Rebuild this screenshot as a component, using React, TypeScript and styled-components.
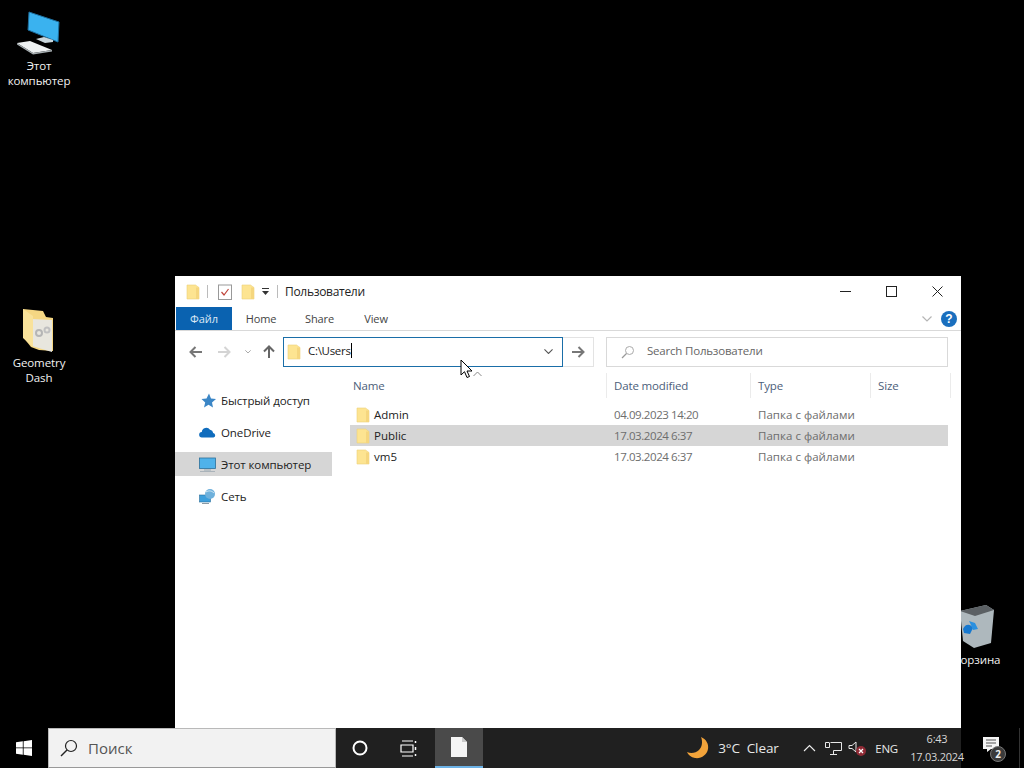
import React from "react";
import styled, { createGlobalStyle } from "styled-components";

const Global = createGlobalStyle`
  html, body { margin: 0; padding: 0; background: #000; overflow: hidden; }
  * { box-sizing: border-box; }
  #root { width: 1024px; height: 768px; }
`;
const FONT = `"Open Sans", "Noto Sans", "Liberation Sans", sans-serif`;

const Desktop = styled.div`
  position: relative; width: 1024px; height: 768px; background: #000; overflow: hidden;
  font-family: ${FONT}; font-size: 12px; color: #1a1a1a;
`;
const Workspace = styled.div`position: relative; height: 728px;`;
const DesktopIcon = styled.div<{ $x: number; $y: number }>`
  position: absolute; left: ${p => p.$x}px; top: ${p => p.$y}px; width: 78px;
  display: flex; flex-direction: column; align-items: center; color: #f2f2f2;
  font-size: 11.5px; line-height: 15px; text-align: center; letter-spacing: -0.1px;
`;
const IconLabel = styled.div`margin-top: 2px;`;
const ShortGlyph = styled.svg`display: block;`;

const Window = styled.div`
  position: absolute; left: 175px; top: 276px; width: 786px; height: 452px;
  background: #fff; display: flex; flex-direction: column;
`;
const TitleBar = styled.div`
  height: 31px; display: flex; align-items: center; padding-left: 10px; flex: none;
`;
const TitleText = styled.span`margin-left: 7px; letter-spacing: -0.3px; color: #222;`;
const Sep = styled.span`width: 1px; height: 13px; background: #bbb; margin: 0 9px 0 6px;`;
const SepTitle = styled(Sep)`margin: 0 0 0 7px;`;
const QuickGap = styled.span<{ $w: number }>`width: ${p => p.$w}px;`;
const WinControls = styled.div`margin-left: auto; display: flex; height: 31px; padding-right: 1px;`;
const WinBtn = styled.div<{ $w?: number }>`
  width: ${p => p.$w ?? 46}px; display: flex; align-items: center; justify-content: center;
`;
const RibbonTabs = styled.div`
  height: 24px; display: flex; align-items: stretch; border-bottom: 1px solid #d9d9d9; flex: none;
  position: relative; padding-left: 1px;
`;
const FileTab = styled.div`
  width: 56px; background: #0a62b0; color: #dbe8f5; display: flex; align-items: center; justify-content: center;
  font-size: 11px; letter-spacing: -0.1px;
`;
const Tab = styled.div<{ $w: number }>`
  width: ${p => p.$w}px; display: flex; align-items: center; justify-content: center;
  font-size: 11px; color: #444; letter-spacing: -0.1px;
`;
const RibbonRight = styled.div`
  margin-left: auto; display: flex; align-items: center; gap: 9px; padding-right: 4px;
`;
const Help = styled.div`
  width: 16px; height: 16px; border-radius: 50%; background: #1a6fbe; color: #fff;
  font: bold 12px "Liberation Sans", sans-serif; display: flex; align-items: center; justify-content: center;
`;
const NavBar = styled.div`
  height: 42px; display: flex; align-items: center; padding: 0 13px 1px 0; flex: none;
`;
const NavBtns = styled.div`
  width: 108px; display: flex; align-items: center; flex: none; padding-left: 13px;
`;
const NavSlot = styled.div<{ $w: number; $gap?: number }>`
  width: ${p => p.$w}px; margin-left: ${p => p.$gap ?? 0}px;
  display: flex; align-items: center; justify-content: center;
`;
const AddressBox = styled.div`
  width: 280px; height: 30px; border: 1px solid #1a6ea8; display: flex; align-items: center; padding: 0 9px 0 2px;
  flex: none;
`;
const AddressText = styled.span`
  margin: 0 0 2px 6px; font-size: 11.5px; letter-spacing: -0.3px; color: #222; border-right: 1px solid #000;
  line-height: 15px;
`;
const AddressSpacer = styled.span`flex: 1;`;
const GoBtn = styled.div`
  width: 31px; height: 30px; border: 1px solid #e3e3e3; border-left: none; display: flex; align-items: center;
  justify-content: center; flex: none;
`;
const SearchBox = styled.div`
  width: 342px; height: 30px; margin-left: 12px; border: 1px solid #d9d9d9; display: flex; align-items: center;
  padding-left: 14px; color: #666; font-size: 11.5px; letter-spacing: -0.2px;
`;
const SearchPlaceholder = styled.span`margin: 0 0 2px 12px;`;
const Body = styled.div`flex: 1; display: flex; min-height: 0;`;
const Sidebar = styled.div`
  width: 175px; flex: none; padding-top: 15px; display: flex; flex-direction: column; gap: 8px;
`;
const NavItem = styled.div<{ $active?: boolean }>`
  width: 157px; height: 24px; display: flex; align-items: center; padding-left: 24px; gap: 5px;
  background: ${p => (p.$active ? "#d6d6d6" : "transparent")}; color: #222;
  font-size: 11.5px; letter-spacing: -0.1px;
`;
const NavIcon = styled.span`width: 17px; height: 17px; display: flex; align-items: center; justify-content: flex-end;`;
const ListPane = styled.div`flex: 1; display: flex; flex-direction: column; position: relative;`;
const Columns = "257px 144px 120px 80px";
const HeaderRow = styled.div`
  display: grid; grid-template-columns: ${Columns}; height: 25px; color: #4c607a; flex: none; margin-bottom: 6px;
  font-size: 11.5px; letter-spacing: -0.15px;
`;
const HeaderCell = styled.div`
  border-right: 1px solid #ebebeb; display: flex; align-items: center; padding: 0 0 1px 7px;
  &:first-child { padding-left: 3px; }
`;
const SortCaret = styled.svg`position: absolute; left: 123px; top: -2px;`;
const Row = styled.div<{ $active?: boolean }>`
  display: grid; grid-template-columns: 257px 144px 120px 76px; height: 21px; align-items: center;
  width: 598px; background: ${p => (p.$active ? "#d6d6d6" : "transparent")};
  font-size: 11.5px;
`;
const NameCell = styled.div`display: flex; align-items: center; gap: 3px; padding-left: 5px; color: #222;`;
const NameLabel = styled.span`margin-bottom: 1px;`;
const MetaCell = styled.div`padding: 0 0 1px 7px; color: #6d6d6d; letter-spacing: -0.42px;`;
const TypeCell = styled(MetaCell)`letter-spacing: 0.03px;`;
const Cursor = styled.svg`position: absolute; left: 460px; top: 359px; z-index: 5;`;

const Taskbar = styled.div`
  position: relative; height: 40px; display: flex; align-items: stretch; background: #000; color: #fff;
`;
const StartBtn = styled.div`width: 48px; display: flex; align-items: center; justify-content: center;`;
const SearchBar = styled.div`
  width: 288px; background: #f2f2f2; border: 1px solid #b9b9b9; border-bottom-color: #999;
  display: flex; align-items: center; padding-left: 11px; color: #555; font-size: 15px;
`;
const SearchLabel = styled.span`margin-left: 10px;`;
const DarkBar = styled.div`
  width: 625px; background: #202020; display: flex; align-items: stretch;
`;
const TaskBtn = styled.div<{ $active?: boolean }>`
  width: 48px; flex: none; display: flex; align-items: center; justify-content: center;
  ${p => p.$active && `background: #4a4a4a; border-bottom: 2px solid #6cb2e6; margin-left: 3px;`}
`;
const Tray = styled.div`
  margin-left: auto; display: flex; align-items: center; padding-right: 0;
`;
const Weather = styled.div`
  display: flex; align-items: center; font-size: 13.5px; color: #e8e8e8; letter-spacing: -0.1px; width: 111px;
`;
const WeatherText = styled.span`margin-left: 8px; white-space: pre;`;
const TrayIcon = styled.div`width: 24px; display: flex; align-items: center; justify-content: center;`;
const Lang = styled.div`font-size: 11.5px; color: #e8e8e8; margin: 0 2px 0 6px; letter-spacing: -0.2px;`;
const Clock = styled.div`
  width: 76px; margin-left: -1px; text-align: center; font-size: 11px; line-height: 18px; color: #d8d8d8; letter-spacing: -0.25px;
  margin-right: -14px; position: relative; z-index: 1;
`;
const NotifyArea = styled.div`
  flex: 1; display: flex; align-items: center; justify-content: center; padding-left: 8px;
  border-right: 1px solid #333; margin-right: 4px;
`;
const Badge = styled.div`position: relative; width: 22px; height: 24px; top: 1px;`;
const BadgeCount = styled.span`
  position: absolute; left: 7px; top: 9px; width: 16px; height: 16px; border-radius: 50%;
  background: #3a3a3a; border: 1px solid #777; color: #eee; font-size: 10px; font-weight: 700;
  display: flex; align-items: center; justify-content: center;
`;

const Folder = ({ s = 16 }: { s?: number }) => (
  <svg width={s} height={s} viewBox="0 0 16 16">
    <path d="M2 1h8.500L14 3.500V15H2z" fill="#fde491" stroke="#ecd07a" strokeWidth="0.6" />
    <path d="M11 3.500h3V15h-3z" fill="#f5d67e" />
  </svg>
);
const Arrow = ({ dir, color }: { dir: "l" | "r" | "u"; color: string }) => {
  const rot = dir === "l" ? 0 : dir === "r" ? 180 : 90;
  return (
    <svg width="14" height="14" viewBox="0 0 14 14" style={{ transform: `rotate(${rot}deg)` }}>
      <path d="M1.5 7H13M6.5 2 1.5 7l5 5" fill="none" stroke={color} strokeWidth="2" />
    </svg>
  );
};
const Chev = ({ w = 9, color = "#555" }: { w?: number; color?: string }) => (
  <svg width={w} height={w * 0.6} viewBox="0 0 10 6">
    <path d="M0.5 0.5 5 5l4.5-4.5" fill="none" stroke={color} strokeWidth="1.2" />
  </svg>
);
const Monitor = ({ s = 17 }: { s?: number }) => (
  <svg width={s} height={s} viewBox="0 0 17 17">
    <rect x="0.5" y="2" width="16" height="10.5" fill="#4fb2ea" stroke="#2b6f9b" strokeWidth="0.8" />
    <rect x="5" y="13.5" width="7" height="1" fill="#9aa9b3" />
    <rect x="1" y="15" width="15" height="1" fill="#aab3ba" />
  </svg>
);

const rows = [
  { name: "Admin", date: "04.09.2023 14:20" },
  { name: "Public", date: "17.03.2024 6:37", active: true },
  { name: "vm5", date: "17.03.2024 6:37" },
];

export default function App() {
  return (
    <Desktop>
      <Global />
      <Workspace>
        <DesktopIcon $x={0} $y={10}>
          <ShortGlyph width="48" height="46" viewBox="0 0 48 46">
            <path d="M14 2 44 12 43 32 13 20z" fill="#3ab2ef" stroke="#1d6d9c" strokeWidth="1" />
            <path d="M21 29l8-2 9 3v2l-8 1z" fill="#c9d6dc" />
            <path d="M2 33l13-2 22 9-19 3z" fill="#eef1f2" />
            <path d="M2 33v1.500L18 44.500l19-3V40l-19 3z" fill="#a8b0b4" />
          </ShortGlyph>
          <IconLabel>Этот<br />компьютер</IconLabel>
        </DesktopIcon>
        <DesktopIcon $x={0} $y={305}>
          <svg width="48" height="48" viewBox="0 0 48 48">
            <path d="M8 4l20 2 3 6 7 1v33l-14-1-8-3-8-10z" fill="#f5d783" />
            <path d="M17 14l20 1v32l-20-6z" fill="#e8e6de" />
            <circle cx="24" cy="28" r="3" fill="none" stroke="#b5b5b5" strokeWidth="2" />
            <circle cx="32" cy="25" r="2.500" fill="none" stroke="#c0c0c0" strokeWidth="2" />
            <path d="M8 4l10 7v31l-10-9z" fill="#f9e29a" />
          </svg>
          <IconLabel>Geometry<br />Dash</IconLabel>
        </DesktopIcon>
        <DesktopIcon $x={938} $y={602}>
          <svg width="48" height="48" viewBox="0 0 48 48">
            <path d="M7 9 33 3 41 8 38 41 21 46 10 39z" fill="#aeb8bd" />
            <path d="M7 9 33 3 41 8 22 14z" fill="#5b6064" />
            <path d="M10 27c2-5 7-6 10-1l-3 6-6-1z" fill="#1678cf" />
            <path d="M16 19l6 2 3 6-5 1-2-5z" fill="#2a90e0" />
          </svg>
          <IconLabel>Корзина</IconLabel>
        </DesktopIcon>

        <Window>
          <TitleBar>
            <Folder />
            <Sep />
            <svg width="16" height="16" viewBox="0 0 16 16">
              <rect x="1.5" y="1" width="13" height="14.5" fill="#fff" stroke="#999" />
              <path d="M4.5 8l2.500 3 4.500-6" fill="none" stroke="#c0463c" strokeWidth="1.2" />
            </svg>
            <QuickGap $w={7} />
            <Folder />
            <QuickGap $w={5} />
            <svg width="9" height="9" viewBox="0 0 9 9">
              <path d="M1 1h7v1H1z" fill="#333" /><path d="M1 4h7L4.500 8z" fill="#333" />
            </svg>
            <SepTitle />
            <TitleText>Пользователи</TitleText>
            <WinControls>
              <WinBtn $w={45}>
                <svg width="11" height="11" viewBox="0 0 11 11"><path d="M0 5.500h11" stroke="#222" /></svg>
              </WinBtn>
              <WinBtn>
                <svg width="11" height="11" viewBox="0 0 11 11"><rect x=".5" y=".5" width="10" height="10" fill="none" stroke="#222" /></svg>
              </WinBtn>
              <WinBtn>
                <svg width="11" height="11" viewBox="0 0 11 11"><path d="M.5.500l10 10M10.500.500l-10 10" stroke="#222" /></svg>
              </WinBtn>
            </WinControls>
          </TitleBar>
          <RibbonTabs>
            <FileTab>Файл</FileTab>
            <Tab $w={58}>Home</Tab>
            <Tab $w={59}>Share</Tab>
            <Tab $w={54}>View</Tab>
            <RibbonRight>
              <Chev w={10} color="#b5b5b5" />
              <Help>?</Help>
            </RibbonRight>
          </RibbonTabs>
          <NavBar>
            <NavBtns>
              <NavSlot $w={15}><Arrow dir="l" color="#777" /></NavSlot>
              <NavSlot $w={14} $gap={14}><Arrow dir="r" color="#d4d4d4" /></NavSlot>
              <NavSlot $w={8} $gap={13}><Chev w={6} color="#888" /></NavSlot>
              <NavSlot $w={14} $gap={10}><Arrow dir="u" color="#666" /></NavSlot>
            </NavBtns>
            <AddressBox>
              <Folder />
              <AddressText>C:\Users</AddressText>
              <AddressSpacer />
              <Chev />
            </AddressBox>
            <GoBtn><Arrow dir="r" color="#777" /></GoBtn>
            <SearchBox>
              <svg width="14" height="14" viewBox="0 0 14 14">
                <circle cx="8.500" cy="5.500" r="4" fill="none" stroke="#aaa" />
                <path d="M5.500 8.500 1 13" stroke="#999" strokeWidth="1.300" />
              </svg>
              <SearchPlaceholder>Search Пользователи</SearchPlaceholder>
            </SearchBox>
          </NavBar>
          <Body>
            <Sidebar>
              <NavItem>
                <NavIcon>
                  <svg width="15" height="15" viewBox="0 0 15 15">
                    <path d="M8 0.500l2 5 5 .5-4 3.500 1 5-4.500-2.700L3 14.500l1.200-5L.5 6l5-.5z" fill="#3b86c6" />
                  </svg>
                </NavIcon>
                Быстрый доступ
              </NavItem>
              <NavItem>
                <NavIcon>
                  <svg width="17" height="12" viewBox="0 0 17 12">
                    <path d="M3 11.500A2.700 2.700 0 0 1 2.800 6 4.500 4.500 0 0 1 11 3.800 3.800 3.800 0 0 1 14.200 7 2.300 2.300 0 0 1 14.500 11.500z" fill="#0f6cbd" />
                  </svg>
                </NavIcon>
                OneDrive
              </NavItem>
              <NavItem $active>
                <NavIcon><Monitor /></NavIcon>
                Этот компьютер
              </NavItem>
              <NavItem>
                <NavIcon>
                  <svg width="17" height="17" viewBox="0 0 17 17">
                    <rect x="0.500" y="7" width="11" height="7" fill="#3d9fdc" stroke="#2b6f9b" strokeWidth=".6" />
                    <circle cx="11" cy="6" r="5" fill="#6fb1dc" />
                    <path d="M7 4c3-2 6-1 8 1" stroke="#d3e8f5" fill="none" />
                    <rect x="3" y="15" width="7" height="1" fill="#8a9aa5" />
                  </svg>
                </NavIcon>
                Сеть
              </NavItem>
            </Sidebar>
            <ListPane>
              <HeaderRow>
                <HeaderCell>Name</HeaderCell>
                <HeaderCell>Date modified</HeaderCell>
                <HeaderCell>Type</HeaderCell>
                <HeaderCell>Size</HeaderCell>
              </HeaderRow>
              <SortCaret width="9" height="6" viewBox="0 0 9 6">
                <path d="M.5 5 4.500 1l4 4" fill="none" stroke="#888" />
              </SortCaret>
              {rows.map(r => (
                <Row key={r.name} $active={r.active}>
                  <NameCell><Folder /><NameLabel>{r.name}</NameLabel></NameCell>
                  <MetaCell>{r.date}</MetaCell>
                  <TypeCell>Папка с файлами</TypeCell>
                  <span />
                </Row>
              ))}
            </ListPane>
          </Body>
        </Window>
        <Cursor width="14" height="20" viewBox="0 0 14 20">
          <path d="M1 1v15l3.500-3.300L7 18.500l2.500-1-2.500-5.500h5z" fill="#fff" stroke="#000" strokeWidth="1" />
        </Cursor>
      </Workspace>
      <Taskbar>
        <StartBtn>
          <svg width="16" height="16" viewBox="0 0 16 16">
            <path d="M0 2.300 6.800 1.300V7.500H0zM7.600 1.200 16 0v7.500H7.600zM0 8.300h6.800v6.400L0 13.700zM7.600 8.300H16V16l-8.400-1.200z" fill="#fff" />
          </svg>
        </StartBtn>
        <SearchBar>
          <svg width="18" height="18" viewBox="0 0 18 18">
            <circle cx="11" cy="7" r="5.500" fill="none" stroke="#222" strokeWidth="1.200" />
            <path d="M7 11 1 17" stroke="#222" strokeWidth="1.400" />
          </svg>
          <SearchLabel>Поиск</SearchLabel>
        </SearchBar>
        <DarkBar>
          <TaskBtn>
            <svg width="16" height="16" viewBox="0 0 16 16">
              <circle cx="8" cy="8" r="6.500" fill="none" stroke="#fff" strokeWidth="2" />
            </svg>
          </TaskBtn>
          <TaskBtn>
            <svg width="17" height="17" viewBox="0 0 17 17">
              <path d="M2 1h11M2 16h11M1 5h12v7H1z" fill="none" stroke="#fff" strokeWidth="1.200" />
              <path d="M15.500 1v2M15.500 7v3M15.500 14v2" stroke="#fff" strokeWidth="1.500" />
            </svg>
          </TaskBtn>
          <TaskBtn $active>
            <svg width="16" height="20" viewBox="0 0 16 20">
              <path d="M0 0h11l5 5v15H0z" fill="#f4f4f4" />
              <path d="M11 0l5 5h-5z" fill="#c9c9c9" />
            </svg>
          </TaskBtn>
          <Tray>
            <Weather>
              <svg width="24" height="24" viewBox="0 0 24 24">
                <path d="M15 1c5 2 8 7 7 12-1 6-7 10-13 9-4-.7-7-3-8-6 4 2 9 1 12-2 3-3 4-8 2-13z" fill="#f2a33a" />
              </svg>
              <WeatherText>3°C  Clear</WeatherText>
            </Weather>
            <TrayIcon>
              <svg width="13" height="8" viewBox="0 0 13 8"><path d="M1 7l5.500-5.500L12 7" fill="none" stroke="#eee" strokeWidth="1.100" /></svg>
            </TrayIcon>
            <TrayIcon>
              <svg width="17" height="15" viewBox="0 0 17 15">
                <path d="M5.500 1.500h11v8h-8M8.500 9.500V13M5 13.500h7M.5 1.500H4M.5 1.500v5h4v-5" fill="none" stroke="#e8e8e8" />
              </svg>
            </TrayIcon>
            <TrayIcon>
              <svg width="18" height="16" viewBox="0 0 18 16">
                <path d="M1 5.500h3L8 2v10L4 8.500H1z" fill="none" stroke="#e8e8e8" />
                <circle cx="13" cy="11" r="5" fill="#8e2a35" />
                <path d="M11 9l4 4M15 9l-4 4" stroke="#fff" strokeWidth="1.200" />
              </svg>
            </TrayIcon>
            <Lang>ENG</Lang>
            <Clock>6:43<br />17.03.2024</Clock>
          </Tray>
        </DarkBar>
        <NotifyArea>
          <Badge>
            <svg width="16" height="15" viewBox="0 0 16 15">
              <path d="M0 0h16v12H8l-4 3v-3H0z" fill="#f4f4f4" />
              <path d="M3 3h10M3 6h10M3 9h6" stroke="#555" />
            </svg>
            <BadgeCount>2</BadgeCount>
          </Badge>
        </NotifyArea>
      </Taskbar>
    </Desktop>
  );
}
